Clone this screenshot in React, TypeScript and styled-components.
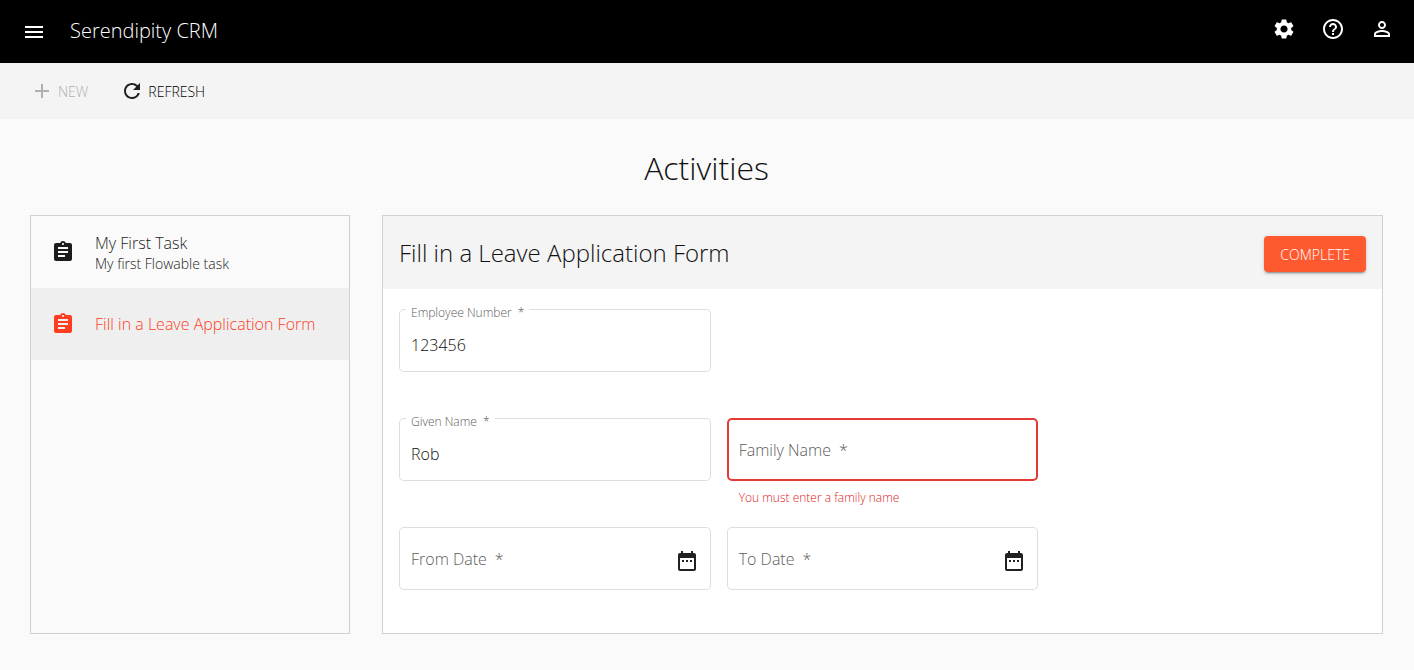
import React from 'react';
import styled, { createGlobalStyle } from 'styled-components';
import {
  MdAdd,
  MdAssignment,
  MdDateRange,
  MdHelpOutline,
  MdMenu,
  MdPersonOutline,
  MdRefresh,
  MdSettings,
} from 'react-icons/md';

const GlobalStyle = createGlobalStyle`
  *, *::before, *::after { box-sizing: border-box; }
  body {
    margin: 0;
    background: #fafafa;
    color: #111;
    font-family: 'Open Sans', 'Noto Sans', sans-serif;
    font-size: 16px;
    font-weight: 300;
  }
  button, input { font: inherit; color: inherit; }
`;

const Page = styled.div`
  display: flex;
  flex-direction: column;
  min-height: 100vh;
`;

const AppBar = styled.header`
  display: flex;
  align-items: flex-start;
  height: 63px;
  padding: 5px 8px 0 10px;
  background: #000;
  color: #fff;
`;

const IconButton = styled.button`
  display: flex;
  align-items: center;
  justify-content: center;
  width: 48px;
  height: 48px;
  padding: 0;
  border: 0;
  background: none;
  cursor: pointer;
`;

const Brand = styled.div`
  display: flex;
  flex: 1;
  align-items: center;
  gap: 12px;
  height: 54px;
`;

const BrandName = styled.span`
  padding-bottom: 2px;
  font-size: 20px;
  line-height: 32px;
`;

const Actions = styled.nav`
  display: flex;
  gap: 1px;
`;

const Toolbar = styled.div`
  display: flex;
  align-items: center;
  gap: 20px;
  height: 56px;
  padding: 0 24px;
  background: #f4f4f4;
`;

const ToolButton = styled.button`
  display: flex;
  align-items: center;
  gap: 4px;
  height: 36px;
  padding: 0 6px;
  border: 0;
  background: none;
  font-size: 14px;
  color: #000;
  cursor: pointer;

  svg { color: #212121; }

  &:disabled,
  &:disabled svg {
    color: #b0b0b0;
    cursor: default;
  }
`;

const Main = styled.main`
  display: flex;
  flex: 1;
  flex-direction: column;
  padding: 27px 31px 36px 30px;
`;

const PageTitle = styled.h1`
  margin: 0 0 25px;
  font-size: 32px;
  font-weight: 300;
  line-height: 44px;
  text-align: center;
`;

const Columns = styled.div`
  display: grid;
  flex: 1;
  grid-template-columns: 320px minmax(0, 1fr);
  gap: 32px;
`;

const TaskList = styled.ul`
  margin: 0;
  padding: 0;
  border: 1px solid #d0d0d0;
  list-style: none;
`;

const TaskButton = styled.button<{ $selected?: boolean }>`
  display: flex;
  align-items: center;
  gap: 20px;
  width: 100%;
  height: 72px;
  padding: 0 20px;
  border: 0;
  background: ${(p) => (p.$selected ? '#efefef' : 'transparent')};
  color: ${(p) => (p.$selected ? '#ff3d1f' : '#1c1c1c')};
  text-align: left;
  cursor: pointer;
`;

const TaskText = styled.span`
  display: flex;
  flex-direction: column;
`;

const TaskName = styled.span`
  line-height: 24px;
`;

const TaskDetail = styled.span`
  font-size: 14px;
  line-height: 18px;
`;

const Card = styled.form`
  border: 1px solid #d0d0d0;
  background: #fff;
`;

const CardHeader = styled.div`
  display: flex;
  align-items: flex-start;
  justify-content: space-between;
  height: 73px;
  padding: 20px 16px 0;
  background: #f4f4f4;
`;

const CardTitle = styled.h2`
  margin: 0;
  font-size: 24px;
  font-weight: 300;
  line-height: 34px;
`;

const PrimaryButton = styled.button`
  height: 36px;
  padding: 0 16px;
  border: 0;
  border-radius: 4px;
  background: #ff5930;
  box-shadow: 0 3px 1px -2px rgba(0, 0, 0, 0.2), 0 2px 2px 0 rgba(0, 0, 0, 0.14),
    0 1px 5px 0 rgba(0, 0, 0, 0.12);
  color: #fff;
  font-size: 14px;
  cursor: pointer;
`;

const FormGrid = styled.div`
  display: grid;
  grid-template-columns: repeat(3, minmax(0, 1fr));
  gap: 16px;
  padding: 20px 16px 12px;
`;

const FieldCell = styled.div<{ $newRow?: boolean }>`
  min-height: 93px;
  grid-column-start: ${(p) => (p.$newRow ? '1' : 'auto')};
`;

const Outline = styled.div<{ $invalid?: boolean }>`
  position: relative;
  display: flex;
  align-items: center;
  height: 63px;
  border-radius: 5px;
  box-shadow: inset 0 0 0 ${(p) => (p.$invalid ? '2px #e53935' : '1px #dedede')};
`;

const FieldLabel = styled.label<{ $floating: boolean }>`
  position: absolute;
  left: 7px;
  top: ${(p) => (p.$floating ? '-5px' : '20px')};
  padding: 0 5px;
  background: #fff;
  color: #5c5c5c;
  font-size: ${(p) => (p.$floating ? '12px' : '16px')};
  line-height: ${(p) => (p.$floating ? '18px' : '24px')};
  pointer-events: none;

  span { margin-left: ${(p) => (p.$floating ? '6px' : '8px')}; }
`;

const TextInput = styled.input`
  flex: 1;
  min-width: 0;
  height: 63px;
  padding: 8px 12px 0;
  border: 0;
  outline: 0;
  background: transparent;
`;

const DateButton = styled(IconButton)`
  padding-top: 4px;
  color: #212121;
`;

const ErrorText = styled.p`
  margin: 8px 12px 0;
  color: #e02020;
  font-size: 12px;
  line-height: 18px;
`;

interface FieldProps {
  id: string;
  label: string;
  value?: string;
  error?: string;
  date?: boolean;
  newRow?: boolean;
}

function Field({ id, label, value = '', error, date, newRow }: FieldProps) {
  const [text, setText] = React.useState(value);
  return (
    <FieldCell $newRow={newRow}>
      <Outline $invalid={!!error}>
        <TextInput
          id={id}
          value={text}
          required
          aria-invalid={!!error}
          aria-describedby={error ? `${id}-error` : undefined}
          onChange={(e) => setText(e.target.value)}
        />
        <FieldLabel htmlFor={id} $floating={text !== ''}>
          {label}
          <span>*</span>
        </FieldLabel>
        {date && (
          <DateButton type="button" aria-label={`Choose ${label}`}>
            <MdDateRange size={24} />
          </DateButton>
        )}
      </Outline>
      {error && <ErrorText id={`${id}-error`}>{error}</ErrorText>}
    </FieldCell>
  );
}

export default function App() {
  return (
    <Page>
      <GlobalStyle />
      <AppBar>
        <Brand>
          <IconButton type="button" aria-label="Menu">
            <MdMenu size={24} />
          </IconButton>
          <BrandName>Serendipity CRM</BrandName>
        </Brand>
        <Actions>
          <IconButton type="button" aria-label="Settings">
            <MdSettings size={24} />
          </IconButton>
          <IconButton type="button" aria-label="Help">
            <MdHelpOutline size={24} />
          </IconButton>
          <IconButton type="button" aria-label="Account">
            <MdPersonOutline size={24} />
          </IconButton>
        </Actions>
      </AppBar>
      <Toolbar>
        <ToolButton type="button" disabled>
          <MdAdd size={24} />
          NEW
        </ToolButton>
        <ToolButton type="button">
          <MdRefresh size={24} />
          REFRESH
        </ToolButton>
      </Toolbar>
      <Main>
        <PageTitle>Activities</PageTitle>
        <Columns>
          <TaskList>
            <li>
              <TaskButton type="button">
                <MdAssignment size={24} />
                <TaskText>
                  <TaskName>My First Task</TaskName>
                  <TaskDetail>My first Flowable task</TaskDetail>
                </TaskText>
              </TaskButton>
            </li>
            <li>
              <TaskButton type="button" $selected>
                <MdAssignment size={24} />
                <TaskText>
                  <TaskName>Fill in a Leave Application Form</TaskName>
                </TaskText>
              </TaskButton>
            </li>
          </TaskList>
          <Card>
            <CardHeader>
              <CardTitle>Fill in a Leave Application Form</CardTitle>
              <PrimaryButton type="button">COMPLETE</PrimaryButton>
            </CardHeader>
            <FormGrid>
              <Field id="employee-number" label="Employee Number" value="123456" />
              <Field id="given-name" label="Given Name" value="Rob" newRow />
              <Field id="family-name" label="Family Name" error="You must enter a family name" />
              <Field id="from-date" label="From Date" date newRow />
              <Field id="to-date" label="To Date" date />
            </FormGrid>
          </Card>
        </Columns>
      </Main>
    </Page>
  );
}
